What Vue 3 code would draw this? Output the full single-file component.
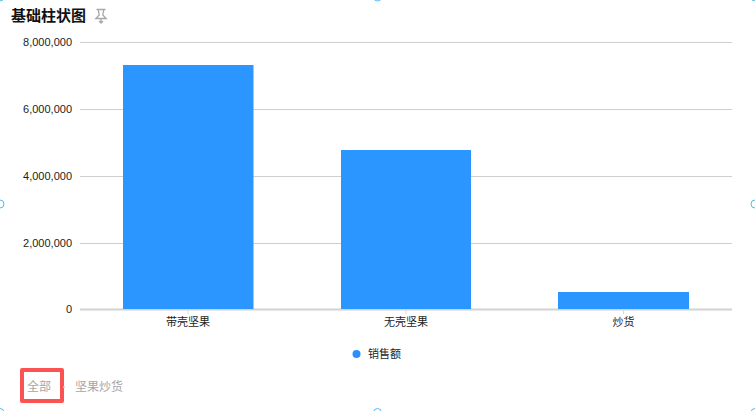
<script setup>
const ticks = [
  { label: '8,000,000', y: 42.5 },
  { label: '6,000,000', y: 109.5 },
  { label: '4,000,000', y: 176.5 },
  { label: '2,000,000', y: 243.5 },
  { label: '0', y: 309.5 }
]
const bars = [
  { label: '带壳坚果', x: 123, w: 130.5, top: 65, cx: 188 },
  { label: '无壳坚果', x: 341, w: 130, top: 150, cx: 406 },
  { label: '炒货', x: 558, w: 131, top: 292, cx: 623.5 }
]
const handles = [
  { cx: 0, cy: -3 }, { cx: 377.5, cy: -3 }, { cx: 755, cy: -3 },
  { cx: 0, cy: 204 }, { cx: 755, cy: 204 },
  { cx: 0, cy: 412.5 }, { cx: 377.5, cy: 412.5 }, { cx: 755, cy: 412.5 }
]
</script>

<template>
  <div class="page">
    <header class="head">
      <h1 class="title">基础柱状图</h1>
      <svg class="pin" viewBox="0 0 14 16" width="14" height="16">
        <path d="M2.5 1.5h9M4.4 1.5v1.2L5.2 7 1.8 10.5h10.4L8.8 7l.8-4.3V1.5M7 10.5V15M5 13l2 2 2-2" fill="none" stroke="#a8a8a8" stroke-width="1.3" />
      </svg>
    </header>

    <svg class="chart" viewBox="0 0 755 338" width="755" height="338">
      <g transform="translate(0,-30)">
        <g v-for="t in ticks" :key="t.label">
          <line x1="80" x2="732" :y1="t.y" :y2="t.y" class="grid" :class="{ base: t.label === '0' }" />
          <text x="72" :y="t.y + 3" text-anchor="end" class="tick">{{ t.label }}</text>
        </g>
        <g v-for="b in bars" :key="b.label">
          <rect :x="b.x" :y="b.top" :width="b.w" :height="309 - b.top" fill="#2b96ff" />
          <line :x1="b.cx" :x2="b.cx" y1="310" y2="314" class="mark" />
          <text :x="b.cx" y="326" text-anchor="middle" class="tick">{{ b.label }}</text>
        </g>
        <circle cx="356.5" cy="354" r="4" fill="#2b8fff" />
        <text x="368" y="358" class="tick">销售额</text>
      </g>
    </svg>

    <nav class="crumbs">
      <span class="crumb current">全部</span>
      <span class="sep"></span>
      <span class="crumb">坚果炒货</span>
    </nav>

    <svg class="handles" viewBox="0 0 755 411" width="755" height="411">
      <circle v-for="(h, i) in handles" :key="i" :cx="h.cx" :cy="h.cy" r="4" fill="#fff" stroke="#4dbdf8" stroke-width="1" />
    </svg>
  </div>
</template>

<style scoped>
.page {
  position: relative;
  width: 755px;
  height: 411px;
  overflow: hidden;
  background: #fff;
  font-family: "Liberation Sans", "Noto Sans CJK SC", sans-serif;
}
.head {
  display: flex;
  align-items: center;
  gap: 8px;
  height: 30px;
  padding: 2px 0 0 11px;
  box-sizing: border-box;
}
.title {
  margin: 0;
  font-size: 15px;
  font-weight: 700;
  line-height: 30px;
  color: #111;
}
.pin {
  display: block;
}
.chart {
  display: block;
}
.grid {
  stroke: #cfcfcf;
  stroke-width: 1;
}
.grid.base {
  stroke: #d2d2d2;
  stroke-width: 2;
}
.mark {
  stroke: #d9d9d9;
}
.tick {
  font-size: 11px;
  fill: #1c1c1c;
}
.crumbs {
  display: flex;
  align-items: flex-start;
  height: 35px;
  padding-left: 20px;
  box-sizing: border-box;
  font-size: 12px;
  line-height: 38px;
  color: #a6a6a6;
}
.crumb.current {
  box-sizing: border-box;
  width: 44px;
  height: 35px;
  padding-left: 3px;
  line-height: 30px;
  border: 4px solid #fb5252;
  border-radius: 2px;
}
.sep {
  width: 2px;
  height: 2px;
  margin: 18px 10px 0 -1px;
  background: #cfcfcf;
  border-radius: 50%;
}
.handles {
  position: absolute;
  inset: 0;
  pointer-events: none;
}
</style>
